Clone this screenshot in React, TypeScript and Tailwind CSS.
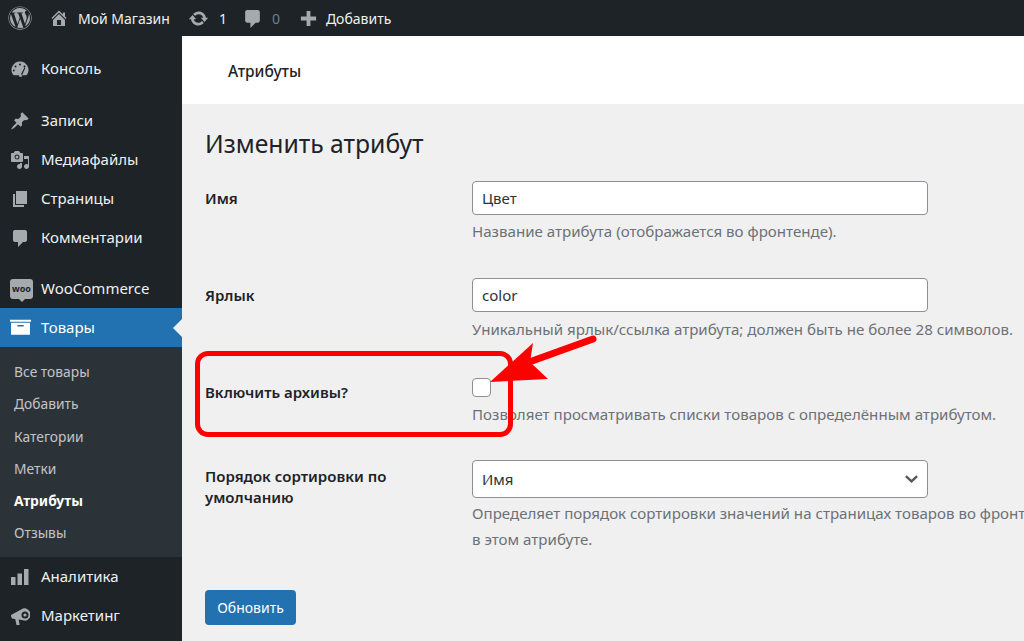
import React from "react";
import { FaWordpress } from "react-icons/fa";

const font = "font-['Noto_Sans','Open_Sans',sans-serif]";
const iconClass = "w-5 h-5 text-[#a7aaad]";

function Bubble({ className }: { className: string }) {
  return (
    <svg viewBox="0 0 20 20" className={className} fill="currentColor">
      <path d="M5 2h10c1.100 0 2 .9 2 2v8c0 1.100-.9 2-2 2h-2l-5 5v-5H5c-1.100 0-2-.9-2-2V4c0-1.100.9-2 2-2z" />
    </svg>
  );
}

function Gauge() {
  return (
    <svg viewBox="0 0 20 20" className={iconClass} fill="currentColor">
      <path fillRule="evenodd" d="M10 2.500a8.500 8.500 0 0 1 7.300 12.800c-.4.600-1 .9-1.700.9H12l3.300-7.200-.9-.4L10.500 16.200H4.400c-.7 0-1.300-.3-1.700-.9A8.500 8.500 0 0 1 10 2.500zM10 4.500a1 1 0 1 0 0 2 1 1 0 0 0 0-2zM5.500 6.500a1 1 0 1 0 0 2 1 1 0 0 0 0-2zM14.500 6.500a1 1 0 1 0 0 2 1 1 0 0 0 0-2zM3.800 10.500a1 1 0 1 0 0 2 1 1 0 0 0 0-2z" />
      <circle cx="10.500" cy="16.500" r="1.500" />
    </svg>
  );
}

function Pin() {
  return (
    <svg viewBox="0 0 20 20" className={iconClass} fill="currentColor">
      <path d="M10.440 3.020l1.820-1.820 6.360 6.350-1.830 1.820c-1.050-.68-2.480-.57-3.410.36l-.75.750c-.92.930-1.040 2.350-.35 3.410l-1.830 1.820-2.410-2.410-2.800 2.790c-.42.420-3.380 2.710-3.800 2.290s1.860-3.390 2.280-3.810l2.790-2.790L4.100 9.360l1.830-1.820c1.050.69 2.480.570 3.400-.36l.75-.75c.93-.92 1.050-2.350.36-3.410z" />
    </svg>
  );
}

function Media() {
  return (
    <svg viewBox="0 0 20 20" className={iconClass} fill="currentColor">
      <path fillRule="evenodd" d="M13 11V4c0-.550-.450-1-1-1h-1.670L9 1H5L3.670 3H2c-.550 0-1 .450-1 1v7c0 .550.450 1 1 1h10c.550 0 1-.450 1-1zM7 4.500a2.500 2.500 0 1 1 0 5 2.500 2.500 0 0 1 0-5z" />
      <circle cx="7" cy="7" r="1.500" />
      <path d="M14 6h5v10.500c0 1.380-1.120 2.500-2.500 2.500S14 17.880 14 16.500s1.120-2.500 2.500-2.500c.540 0 1 .200 1.500.450V9h-4V6zM10 14.050V13h2v3.500c0 1.380-1.120 2.500-2.500 2.500S7 17.880 7 16.500 8.120 14 9.500 14c.180 0 .340.020.500.050z" />
    </svg>
  );
}

function Pages() {
  return (
    <svg viewBox="0 0 20 20" className={iconClass} fill="currentColor">
      <path d="M6 15V2h11v13H6zm-1 1h9v2H3V5h2v11z" />
    </svg>
  );
}

function Woo() {
  return (
    <div className="relative w-[23px] h-[20px] rounded-[3px] bg-[#a7aaad] flex items-center justify-center text-[9px] font-bold leading-none text-[#1d2327]">
      woo
      <span className="absolute left-[9px] top-[20px] w-0 h-0 border-x-[3px] border-x-transparent border-t-[3px] border-t-[#a7aaad]" />
    </div>
  );
}

function Box() {
  return (
    <svg viewBox="0 0 20 20" className="w-[21px] h-[21px] text-white" fill="currentColor">
      <path fillRule="evenodd" d="M0 2.500h20v2H0zM1 5.500h18V17H1zM7 7.500v1.500h6V7.500z" />
    </svg>
  );
}

function Bars() {
  return (
    <svg viewBox="0 0 20 20" className={iconClass} fill="currentColor">
      <path d="M18.500 18V2h-4.500v16h4.500zm-6.500 0V6.500H7.500V18H12zm-6.500 0v-8H1v8h4.500z" />
    </svg>
  );
}

function Horn() {
  return (
    <svg viewBox="0 0 20 20" className={iconClass} fill="currentColor">
      <path fillRule="evenodd" d="M1 9l12-6.500a6 6 0 1 1 2.500 12.300L8.700 13.500l.9 5.500H6.500L5.200 13 2 12.500c-.7-.6-1-2.600-1-3.500zM15 5.500a3.500 3.500 0 1 0 0 7 3.500 3.500 0 0 0 0-7z" />
      <circle cx="15" cy="9" r="1.600" />
    </svg>
  );
}

function MenuItem({ icon, label, active }: { icon: React.ReactNode; label: string; active?: boolean }) {
  return (
    <div className={`relative h-[39px] flex items-center pl-[10px] ${active ? "bg-[#2271b1] text-white" : "text-[#f0f0f1]"}`}>
      <span className="w-[31px] flex items-center shrink-0">{icon}</span>
      <span className="text-[15px]">{label}</span>
      {active && (
        <span className="absolute right-0 top-[11px] w-0 h-0 border-y-[9px] border-y-transparent border-r-[9px] border-r-[#f0f0f1]" />
      )}
    </div>
  );
}

function SubItem({ label, current }: { label: string; current?: boolean }) {
  return (
    <div className={`h-[32.200px] flex items-center pl-[14px] text-[13.800px] ${current ? "font-bold text-white" : "text-[#c3c4c7]"}`}>
      {label}
    </div>
  );
}

function Row({ label, children, className, labelClass }: { label: React.ReactNode; children: React.ReactNode; className: string; labelClass: string }) {
  return (
    <div className={`flex ${className}`}>
      <div className={`w-[267px] shrink-0 text-[15px] font-semibold leading-[21px] text-[#1d2327] ${labelClass}`}>{label}</div>
      <div className="flex-1 whitespace-nowrap">{children}</div>
    </div>
  );
}

function Field({ value }: { value: string }) {
  return (
    <div className="w-[456px] h-[34px] rounded-[4px] border border-[#8c8f94] bg-white pl-[9px] pt-[1px] flex items-center text-[15px] text-[#2c3338]">
      {value}
    </div>
  );
}

function Hint({ children, className }: { children: React.ReactNode; className: string }) {
  return <p className={`text-[15.100px] text-[#6c7177] ${className}`}>{children}</p>;
}

export default function App() {
  return (
    <div className={`${font} w-[1024px] h-[641px] overflow-hidden relative bg-[#f0f0f1] flex flex-col`}>
      <header className="h-[36px] shrink-0 bg-[#1d2327] flex items-center pl-[8px] text-[14px] text-[#f0f0f1]">
        <FaWordpress className="w-[24px] h-[24px] text-[#a7aaad]" />
        <svg viewBox="0 0 20 20" className="w-[20px] h-[20px] text-[#a7aaad] ml-[17px]" fill="currentColor">
          <path fillRule="evenodd" d="M16 8.500l1.530 1.530-1.060 1.060L10 4.620l-6.470 6.470-1.060-1.060L10 2.500l4 4v-2h2v4zm-6-2.460l6 5.990V18H4v-5.970zM12 17v-5H8v5h4z" />
        </svg>
        <span className="ml-[9px]">Мой Магазин</span>
        <svg viewBox="0 0 20 20" className="w-[21px] h-[21px] text-[#a7aaad] ml-[18px]" fill="currentColor">
          <path d="M10.200 3.280c3.530 0 6.430 2.610 6.920 6h2.080l-3.500 4-3.500-4h2.320c-.450-1.970-2.210-3.440-4.320-3.440-1.450 0-2.730.710-3.540 1.780L4.950 5.660C6.230 4.200 8.110 3.280 10.200 3.280zm-.4 13.440c-3.520 0-6.430-2.610-6.920-6H.8l3.500-4c1.170 1.330 2.330 2.670 3.500 4H5.480c.450 1.970 2.210 3.440 4.320 3.440 1.450 0 2.730-.710 3.540-1.780l1.710 1.950c-1.280 1.460-3.150 2.390-5.250 2.390z" />
        </svg>
        <span className="ml-[10px]">1</span>
        <Bubble className="w-[21px] h-[21px] text-[#a7aaad] ml-[15px]" />
        <span className="ml-[9px] text-[#787c82]">0</span>
        <svg viewBox="0 0 20 20" className="w-[19px] h-[19px] text-[#a7aaad] ml-[19px]" fill="currentColor">
          <path d="M8 2h4v6h6v4h-6v6H8v-6H2V8h6z" />
        </svg>
        <span className="ml-[8px]">Добавить</span>
      </header>
      <div className="flex-1 flex min-h-0">
        <aside className="w-[182px] shrink-0 bg-[#1d2327] pt-[13px]">
          <MenuItem icon={<Gauge />} label="Консоль" />
          <div className="h-[13px]" />
          <MenuItem icon={<Pin />} label="Записи" />
          <MenuItem icon={<Media />} label="Медиафайлы" />
          <MenuItem icon={<Pages />} label="Страницы" />
          <MenuItem icon={<Bubble className={iconClass} />} label="Комментарии" />
          <div className="h-[12px]" />
          <MenuItem icon={<Woo />} label="WooCommerce" />
          <MenuItem icon={<Box />} label="Товары" active />
          <div className="bg-[#2c3338] pt-[9.500px] pb-[7.500px]">
            <SubItem label="Все товары" />
            <SubItem label="Добавить" />
            <SubItem label="Категории" />
            <SubItem label="Метки" />
            <SubItem label="Атрибуты" current />
            <SubItem label="Отзывы" />
          </div>
          <MenuItem icon={<Bars />} label="Аналитика" />
          <MenuItem icon={<Horn />} label="Маркетинг" />
        </aside>
        <main className="flex-1 min-w-0">
          <div className="h-[68px] bg-white flex items-center pl-[46px] pt-[3px] text-[15.500px] font-medium text-[#1d2327]">Атрибуты</div>
          <div className="pl-[23px]">
            <h1 className="mt-[23px] text-[24.700px] leading-[34px] text-[#1d2327]">Изменить атрибут</h1>
            <Row label="Имя" labelClass="pt-[6.500px]" className="mt-[20px]">
              <Field value="Цвет" />
              <Hint className="mt-[6px] leading-[21px]">Название атрибута (отображается во фронтенде).</Hint>
            </Row>
            <Row label="Ярлык" labelClass="pt-[6.500px]" className="mt-[36px]">
              <Field value="color" />
              <Hint className="mt-[7px] leading-[21px]">Уникальный ярлык/ссылка атрибута; должен быть не более 28 символов.</Hint>
            </Row>
            <Row label="Включить архивы?" labelClass="pt-[3.500px]" className="mt-[38px]">
              <div className="w-[19px] h-[19px] rounded-[4px] border border-[#8c8f94] bg-white" />
              <Hint className="mt-[7px] leading-[21px]">Позволяет просматривать списки товаров с определённым атрибутом.</Hint>
            </Row>
            <Row label={<>Порядок сортировки по<br />умолчанию</>} labelClass="pt-[5.500px]" className="mt-[35px]">
              <div className="w-[456px] h-[38px] rounded-[4px] border border-[#8c8f94] bg-white pl-[9px] pr-[9px] flex items-center justify-between text-[15px] text-[#2c3338]">
                Имя
                <svg viewBox="0 0 14 8" className="w-[13px] h-[8px]" fill="none" stroke="#50575e" strokeWidth="2.500"><path d="M1 1l6 5.500 6-5.500" /></svg>
              </div>
              <Hint className="mt-[2px] leading-[26px]">Определяет порядок сортировки значений на страницах товаров во фронтенде<br />в этом атрибуте.</Hint>
            </Row>
            <div className="mt-[38px] w-[91px] h-[35px] rounded-[4px] bg-[#2271b1] text-white text-[14px] flex items-center justify-center">Обновить</div>
          </div>
        </main>
      </div>
      <div className="absolute left-[195px] top-[351px] w-[318px] h-[86px] rounded-[13px] border-[5px] border-[#ff0000]" />
      <svg className="absolute left-[480px] top-[330px] w-[130px] h-[70px]" viewBox="0 0 130 70">
        <path d="M113 9 L52 31" stroke="#ff0000" strokeWidth="7" strokeLinecap="round" fill="none" />
        <path d="M10 52 L53 13 L50 32 L68 49 Z" fill="#ff0000" />
      </svg>
    </div>
  );
}
